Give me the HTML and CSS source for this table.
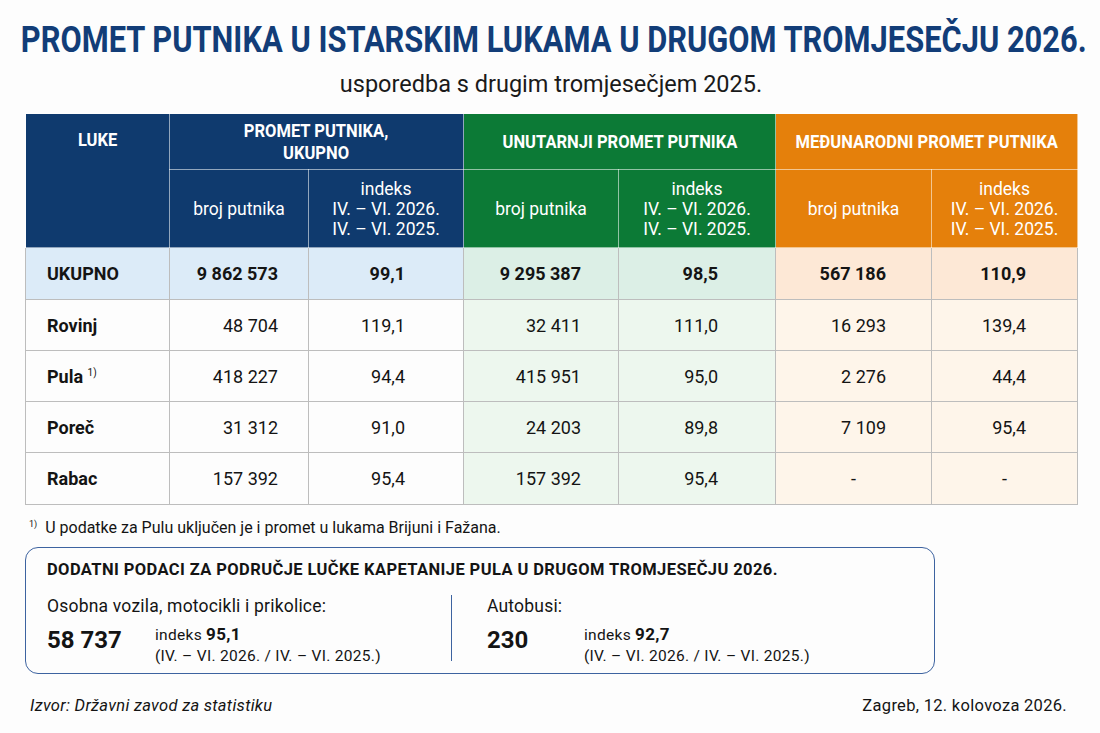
FILE: index.html
```html
<!DOCTYPE html>
<html lang="hr">
<head>
<meta charset="utf-8">
<title>Promet putnika</title>
<link rel="stylesheet" href="styles.css">
</head>
<body>
<div class="page">
  <div class="title-wrap">
    <h1 class="title">PROMET PUTNIKA U ISTARSKIM LUKAMA U DRUGOM TROMJESEČJU 2026.</h1>
  </div>
  <p class="subtitle">usporedba s drugim tromjesečjem 2025.</p>

  <table class="data">
    <colgroup>
      <col class="c1"><col class="c2"><col class="c3"><col class="c4"><col class="c5"><col class="c6"><col class="c7">
    </colgroup>
    <thead>
      <tr class="h1row">
        <th rowspan="2" class="blue luke"><span class="hx">LUKE</span></th>
        <th colspan="2" class="blue"><span class="hx">PROMET PUTNIKA,<br>UKUPNO</span></th>
        <th colspan="2" class="green"><span class="hx">UNUTARNJI PROMET PUTNIKA</span></th>
        <th colspan="2" class="orange"><span class="hx">MEĐUNARODNI PROMET PUTNIKA</span></th>
      </tr>
      <tr class="h2row">
        <th class="blue sub">broj putnika</th>
        <th class="blue sub">indeks<br>IV. – VI. 2026.<br>IV. – VI. 2025.</th>
        <th class="green sub">broj putnika</th>
        <th class="green sub">indeks<br>IV. – VI. 2026.<br>IV. – VI. 2025.</th>
        <th class="orange sub">broj putnika</th>
        <th class="orange sub">indeks<br>IV. – VI. 2026.<br>IV. – VI. 2025.</th>
      </tr>
    </thead>
    <tbody>
      <tr class="total tall">
        <td class="name tb">UKUPNO</td>
        <td class="tb n1">9 862 573</td>
        <td class="tb i1">99,1</td>
        <td class="tg n2">9 295 387</td>
        <td class="tg i2">98,5</td>
        <td class="to n3">567 186</td>
        <td class="to i3">110,9</td>
      </tr>
      <tr>
        <td class="name">Rovinj</td>
        <td class="n1">48 704</td>
        <td class="i1">119,1</td>
        <td class="lg n2">32 411</td>
        <td class="lg i2">111,0</td>
        <td class="lo n3">16 293</td>
        <td class="lo i3">139,4</td>
      </tr>
      <tr>
        <td class="name">Pula <sup>1)</sup></td>
        <td class="n1">418 227</td>
        <td class="i1">94,4</td>
        <td class="lg n2">415 951</td>
        <td class="lg i2">95,0</td>
        <td class="lo n3">2 276</td>
        <td class="lo i3">44,4</td>
      </tr>
      <tr>
        <td class="name">Poreč</td>
        <td class="n1">31 312</td>
        <td class="i1">91,0</td>
        <td class="lg n2">24 203</td>
        <td class="lg i2">89,8</td>
        <td class="lo n3">7 109</td>
        <td class="lo i3">95,4</td>
      </tr>
      <tr class="tall">
        <td class="name">Rabac</td>
        <td class="n1">157 392</td>
        <td class="i1">95,4</td>
        <td class="lg n2">157 392</td>
        <td class="lg i2">95,4</td>
        <td class="lo dash">-</td>
        <td class="lo dash">-</td>
      </tr>
    </tbody>
  </table>

  <p class="footnote"><sup>1)</sup> U podatke za Pulu uključen je i promet u lukama Brijuni i Fažana.</p>

  <section class="extra">
    <h2 class="extra-title">DODATNI PODACI ZA PODRUČJE LUČKE KAPETANIJE PULA U DRUGOM TROMJESEČJU 2026.</h2>
    <div class="extra-cols">
      <div class="extra-col">
        <div class="extra-label">Osobna vozila, motocikli i prikolice:</div>
        <div class="extra-row">
          <span class="big">58 737</span>
          <span class="idx">indeks <b>95,1</b><br>(IV. – VI. 2026. / IV. – VI. 2025.)</span>
        </div>
      </div>
      <div class="divider"></div>
      <div class="extra-col second">
        <div class="extra-label">Autobusi:</div>
        <div class="extra-row">
          <span class="big short">230</span>
          <span class="idx">indeks <b>92,7</b><br>(IV. – VI. 2026. / IV. – VI. 2025.)</span>
        </div>
      </div>
    </div>
  </section>

  <footer class="foot">
    <span class="source">Izvor: Državni zavod za statistiku</span>
    <span class="date">Zagreb, 12. kolovoza 2026.</span>
  </footer>
</div>
</body>
</html>
```

FILE: styles.css
```css
html, body {
  margin: 0;
  padding: 0;
  background: #fdfdfd;
}
body {
  font-family: Roboto, "Noto Sans", sans-serif;
  color: #141414;
}
.page {
  width: 1100px;
  height: 733px;
  box-sizing: border-box;
  padding: 19px 23px 0 25px;
  overflow: hidden;
}
.title-wrap {
  display: flex;
  justify-content: center;
  height: 42px;
}
.title {
  margin: 0;
  flex: none;
  font-weight: 700;
  font-size: 36.5px;
  line-height: 42px;
  color: #123d78;
  white-space: nowrap;
  transform: scaleX(0.845);
  transform-origin: center;
  margin-left: 5px;
}
.subtitle {
  margin: 10px 0 0;
  text-align: center;
  font-size: 23.5px;
  line-height: 26px;
  color: #1a1a1a;
}
.data {
  margin-top: 16px;
  width: 1052px;
  border-collapse: collapse;
  table-layout: fixed;
}
.c1 { width: 144px; }
.c2 { width: 139px; }
.c3 { width: 155px; }
.c4 { width: 155px; }
.c5 { width: 157px; }
.c6 { width: 156px; }
.c7 { width: 146px; }

.data th {
  color: #fff;
  border: 1px solid rgba(255,255,255,0.55);
  padding: 0;
}
.hx {
  display: inline-block;
  transform: scaleX(0.87);
  transform-origin: center;
}
.h1row th {
  height: 55px;
  font-weight: 700;
  font-size: 19px;
  line-height: 22px;
  white-space: nowrap;
}
.h1row th.luke {
  vertical-align: top;
  padding-top: 15px;
}
.h2row th {
  height: 77px;
  font-weight: 400;
  font-size: 17.5px;
  line-height: 20px;
}
.blue { background: #0f3a6e; }
.green { background: #0c7a36; }
.orange { background: #e5800b; }

.data td {
  height: 50px;
  border: 1px solid #bdbdbd;
  font-size: 18px;
  text-align: right;
  padding: 0;
}
.data tr.tall td { height: 51px; }
.data td.name {
  text-align: left;
  padding-left: 21px;
  font-weight: 700;
}
.data td.name sup {
  font-size: 10px;
  font-weight: 400;
}
.total td { font-weight: 700; }
.n1 { padding-right: 30px !important; }
.i1 { padding-right: 58px !important; }
.n2 { padding-right: 37px !important; }
.i2 { padding-right: 57px !important; }
.n3 { padding-right: 45px !important; }
.i3 { padding-right: 51px !important; }
.data td.dash { text-align: center; }

.tb { background: #dcebf8; }
.tg { background: #dcefe6; }
.to { background: #fde8d6; }
.lg { background: #edf7ee; }
.lo { background: #fef5ea; }

.footnote {
  margin: 9px 0 0 4px;
  font-size: 16px;
  line-height: 20px;
}
.footnote sup {
  font-size: 9px;
  margin-right: 4px;
}

.extra {
  margin-top: 9px;
  width: 910px;
  height: 127px;
  box-sizing: border-box;
  border: 1.5px solid #3d63a0;
  border-radius: 13px;
  padding: 12px 20px 0 21px;
}
.extra-title {
  margin: 0;
  font-size: 16.5px;
  letter-spacing: 0.4px;
  font-weight: 700;
  line-height: 20px;
}
.extra-cols {
  display: flex;
  align-items: flex-start;
  margin-top: 15px;
}
.extra-col { width: 404px; }
.extra-col.second { padding-left: 35px; }
.divider {
  width: 1px;
  height: 66px;
  background: #3d63a0;
  margin-top: 0;
}
.extra-label {
  font-size: 17.5px;
  letter-spacing: 0.2px;
  line-height: 22px;
}
.extra-row {
  display: flex;
  align-items: flex-start;
  margin-top: 7px;
}
.big {
  width: 108px;
  font-size: 24px;
  font-weight: 700;
  line-height: 32px;
}
.big.short { width: 97px; }
.idx {
  font-size: 15.5px;
  letter-spacing: 0.3px;
  line-height: 21px;
}
.idx b { font-size: 17px; }

.foot {
  display: flex;
  justify-content: space-between;
  margin-top: 22px;
  padding: 0 10px 0 5px;
  font-size: 16.5px;
  letter-spacing: 0.3px;
  line-height: 20px;
}
.source { font-style: italic; }
.date { font-size: 16.5px; }
```
